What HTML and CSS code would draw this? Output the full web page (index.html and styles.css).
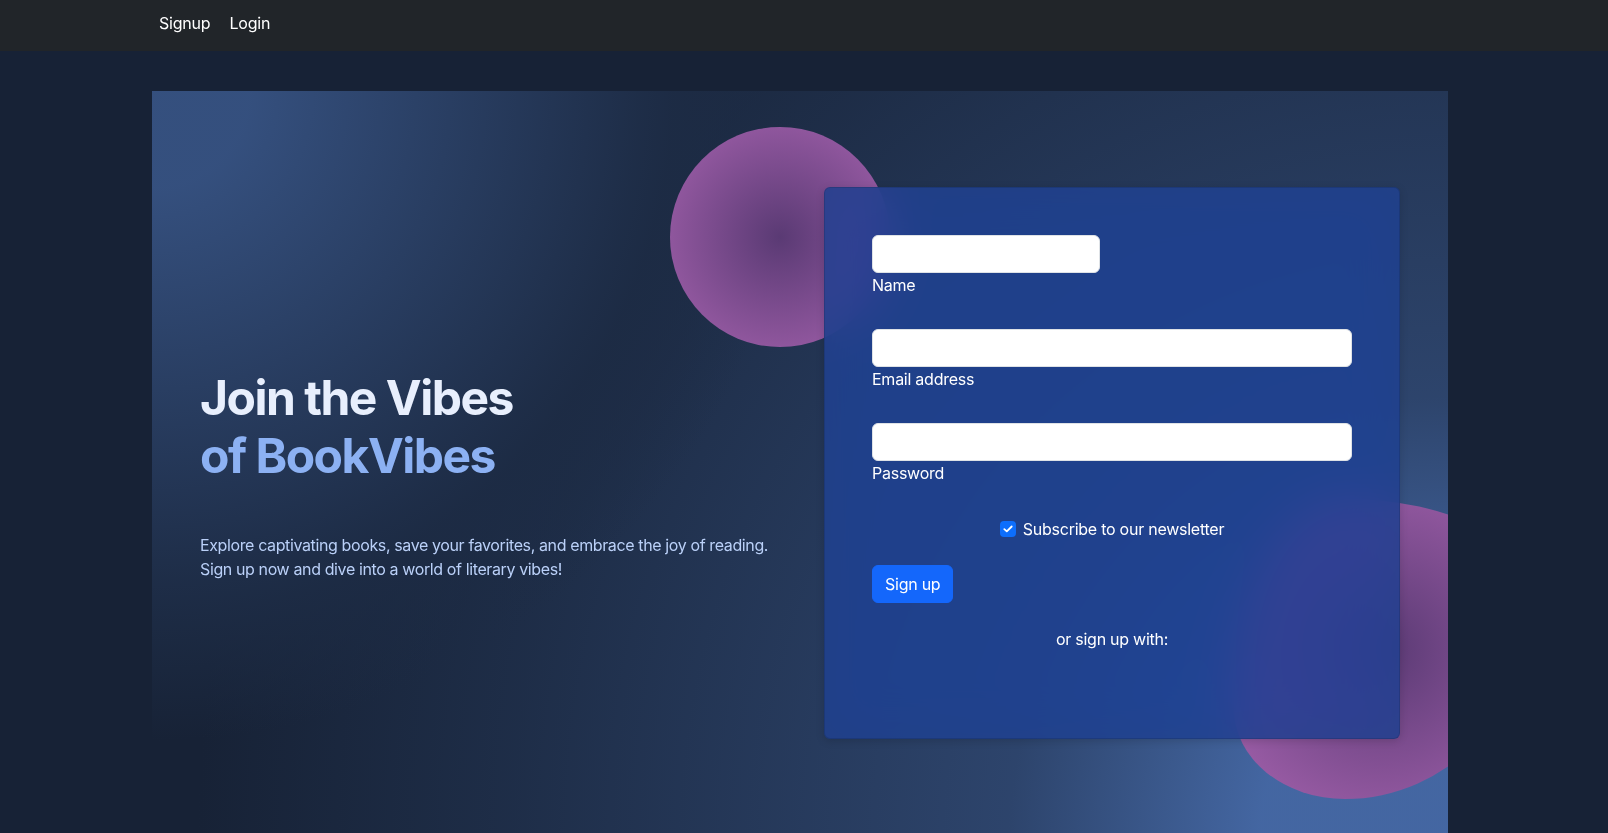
FILE: index.html
```html
<!DOCTYPE html>
<html lang="en">
<head>
<meta charset="utf-8">
<title>BookVibes - Signup</title>
<link rel="stylesheet" href="styles.css">
</head>
<body>
<nav class="navbar">
  <div class="nav-inner">
    <a class="nav-link" href="#">Signup</a>
    <a class="nav-link" href="#">Login</a>
  </div>
</nav>
<div class="page">
  <section class="hero">
    <div class="hero-row">
      <div class="hero-text">
        <h1 class="hero-title">Join the Vibes <br><span class="hero-accent">of BookVibes</span></h1>
        <p class="hero-lead">Explore captivating books, save your favorites, and embrace the joy of reading. Sign up now and dive into a world of literary vibes!</p>
      </div>
      <div class="hero-form">
        <div class="shape shape-1"></div>
        <div class="shape shape-2"></div>
        <div class="card">
          <form class="card-body">
            <div class="field-row">
              <div class="field field-half">
                <input class="form-control" type="text">
                <label class="form-label">Name</label>
              </div>
            </div>
            <div class="field">
              <input class="form-control" type="email">
              <label class="form-label">Email address</label>
            </div>
            <div class="field">
              <input class="form-control" type="password">
              <label class="form-label">Password</label>
            </div>
            <div class="check-row">
              <span class="check-box"><svg width="10" height="8" viewBox="0 0 10 8"><path d="M1.3 4.1 L3.8 6.4 L8.7 1.5" fill="none" stroke="#fff" stroke-width="1.8" stroke-linecap="round" stroke-linejoin="round"/></svg></span>
              <span class="check-label">Subscribe to our newsletter</span>
            </div>
            <button class="btn-primary" type="button">Sign up</button>
            <p class="alt-text">or sign up with:</p>
            <div class="social"></div>
          </form>
        </div>
      </div>
    </div>
  </section>
</div>
</body>
</html>
```
FILE: styles.css
```css
* { box-sizing: border-box; }

html, body {
  margin: 0;
  padding: 0;
}

body {
  background-color: hsl(218, 41%, 15%);
  font-family: "Inter", "Liberation Sans", sans-serif;
  font-size: 16px;
  line-height: 1.5;
  color: #fff;
  overflow: hidden;
  height: 833px;
}

.navbar {
  background-color: #212529;
  height: 51px;
}

.nav-inner {
  width: 1600px;
  padding: 11px 0 0 151px;
  display: flex;
  gap: 3px;
}

.nav-link {
  color: #fff;
  text-decoration: none;
  padding: 0 8px;
  line-height: 24px;
  font-size: 16px;
  letter-spacing: -0.2px;
}

.page {
  width: 1600px;
}

.hero {
  width: 1296px;
  margin: 40px auto 0;
  padding: 96px 48px 96px;
  position: relative;
  overflow: hidden;
  background-color: hsl(218, 41%, 15%);
  background-image:
    radial-gradient(650px circle at 0% 0%,
      hsl(218, 41%, 35%) 15%,
      hsl(218, 41%, 30%) 35%,
      hsl(218, 41%, 20%) 75%,
      hsl(218, 41%, 19%) 80%,
      transparent 100%),
    radial-gradient(1250px circle at 100% 100%,
      hsl(218, 41%, 45%) 15%,
      hsl(218, 41%, 30%) 35%,
      hsl(218, 41%, 20%) 75%,
      hsl(218, 41%, 19%) 80%,
      transparent 100%);
}

.hero-row {
  display: flex;
  align-items: center;
  gap: 48px;
}

.hero-text {
  width: 576px;
  flex: none;
  position: relative;
  z-index: 10;
}

.hero-title {
  margin: 48px 0;
  font-size: 48px;
  line-height: 1.2;
  font-weight: 700;
  letter-spacing: -1.5px;
  color: hsl(218, 81%, 95%);
}

.hero-accent {
  color: hsl(218, 81%, 75%);
}

.hero-lead {
  margin: 0 0 24px;
  color: hsl(218, 81%, 85%);
  letter-spacing: -0.38px;
}

.hero-form {
  width: 576px;
  flex: none;
  position: relative;
}

.shape {
  position: absolute;
  background: radial-gradient(#5a3a74, #a562ae);
}

.shape-1 {
  width: 220px;
  height: 220px;
  top: -60px;
  left: -154px;
  border-radius: 50%;
}

.shape-2 {
  width: 300px;
  height: 300px;
  bottom: -60px;
  right: -134px;
  border-radius: 38% 62% 63% 37% / 70% 33% 67% 30%;
}

.card {
  position: relative;
  background-color: hsla(222, 62%, 34%, 0.88);
  backdrop-filter: saturate(200%) blur(25px);
  border: 1px solid rgba(0, 0, 0, 0.12);
  border-radius: 6px;
  box-shadow: 0 2px 8px rgba(0, 0, 0, 0.15);
}

.card-body {
  padding: 47px 47px 47px;
  margin: 0;
}

.field-row {
  display: flex;
}

.field {
  display: flow-root;
  margin-bottom: 24px;
}

.field-half {
  width: 228px;
}

.form-control {
  display: block;
  width: 100%;
  height: 38px;
  padding: 6px 12px;
  font-family: inherit;
  font-size: 16px;
  background: #fff;
  border: 1px solid #dee2e6;
  border-radius: 6px;
  outline: none;
}

.form-label {
  display: block;
  margin-bottom: 8px;
  line-height: 24px;
  color: #fff;
  letter-spacing: -0.25px;
}

.check-row {
  display: flex;
  justify-content: center;
  align-items: center;
  gap: 7px;
  margin-bottom: 24px;
  height: 24px;
}

.check-box {
  width: 16px;
  height: 16px;
  border-radius: 4px;
  background-color: #0d6efd;
  display: flex;
  align-items: center;
  justify-content: center;
}

.check-label {
  letter-spacing: -0.25px;
}

.btn-primary {
  display: block;
  height: 38px;
  padding: 6px 12px;
  margin-bottom: 24px;
  font-family: inherit;
  font-size: 16px;
  line-height: 24px;
  color: #fff;
  background-color: #1467fb;
  border: 1px solid #1467fb;
  border-radius: 6px;
  letter-spacing: -0.25px;
}

.alt-text {
  margin: 0 0 16px;
  text-align: center;
  letter-spacing: -0.25px;
}

.social {
  height: 24px;
}
```
